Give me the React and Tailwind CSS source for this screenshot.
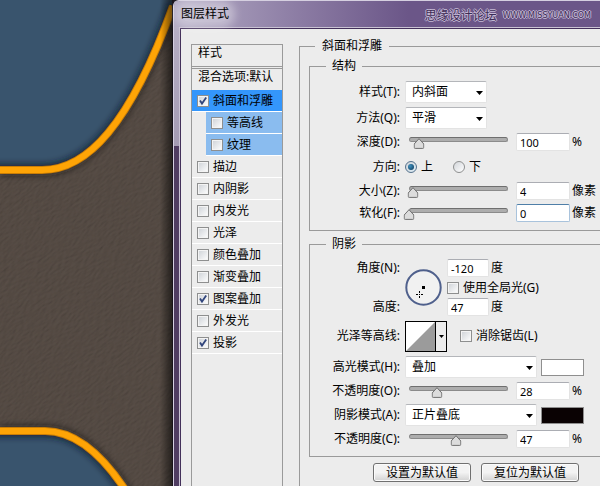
import React, { useState } from 'react';

const EFFECTS = [
  { name: '斜面和浮雕', checked: true, active: true },
  { name: '等高线', checked: false, sub: true },
  { name: '纹理', checked: false, sub: true },
  { name: '描边', checked: false },
  { name: '内阴影', checked: false },
  { name: '内发光', checked: false },
  { name: '光泽', checked: false },
  { name: '颜色叠加', checked: false },
  { name: '渐变叠加', checked: false },
  { name: '图案叠加', checked: true },
  { name: '外发光', checked: false },
  { name: '投影', checked: true },
];

// Document canvas behind the dialog
function Artwork() {
  return (
    <svg className="absolute left-0 top-0" width="200" height="486" viewBox="0 0 200 486" aria-hidden="true">
      <defs>
        <filter id="leather" x="0" y="0" width="100%" height="100%">
          <feTurbulence type="fractalNoise" baseFrequency="0.16 0.5" numOctaves="3" seed="8" result="noise" />
          <feDiffuseLighting in="noise" surfaceScale="0.55" diffuseConstant="1.2" lightingColor="#534843">
            <feDistantLight azimuth="250" elevation="58" />
          </feDiffuseLighting>
        </filter>
        <filter id="soft" x="-20%" y="-20%" width="140%" height="140%">
          <feGaussianBlur stdDeviation="3" />
        </filter>
        <linearGradient id="edge" x1="0" x2="1">
          <stop offset="0" stopColor="#000" stopOpacity="0" />
          <stop offset="1" stopColor="#000" stopOpacity="0.6" />
        </linearGradient>
        <clipPath id="topShape">
          <path d="M0 0H173V6C150 70 128 109 108 133C88 157 66 170 42 170H0Z" />
        </clipPath>
        <clipPath id="bottomShape">
          <path d="M0 431H45C78 431 105 458 128 494H0Z" />
        </clipPath>
      </defs>
      <rect width="200" height="486" fill="#4b413d" />
      <g transform="rotate(-38 100 243)">
        <rect x="-220" y="-120" width="640" height="730" filter="url(#leather)" />
      </g>
      <g fill="none" stroke="#1c1512" strokeOpacity="0.5" strokeWidth="10" filter="url(#soft)">
        <path d="M0 171H42C66 171 88 158 108 134S150 71 173 7" />
        <path d="M0 430H45C78 430 105 457 128 493" />
      </g>
      <g clipPath="url(#topShape)">
        <rect width="180" height="180" fill="#39546d" />
        <path d="M-10 170H42C66 170 88 157 108 133S150 70 173 6" fill="none" stroke="#101c28" strokeOpacity="0.75" strokeWidth="12" filter="url(#soft)" />
      </g>
      <g clipPath="url(#bottomShape)">
        <rect y="425" width="180" height="70" fill="#39546d" />
        <path d="M-10 431H45C78 431 105 458 128 494" fill="none" stroke="#101c28" strokeOpacity="0.75" strokeWidth="12" filter="url(#soft)" />
      </g>
      <g fill="none">
        <path d="M0 170H42C66 170 88 157 108 133S150 70 173 6" stroke="#c97d06" strokeWidth="8" />
        <path d="M0 170H42C66 170 88 157 108 133S150 70 173 6" stroke="#fea406" strokeWidth="6" />
        <path d="M0 431H45C78 431 105 458 128 494" stroke="#c97d06" strokeWidth="8" />
        <path d="M0 431H45C78 431 105 458 128 494" stroke="#fea406" strokeWidth="6" />
      </g>
      <rect x="160" width="13" height="486" fill="url(#edge)" />
      <rect x="172" width="28" height="486" fill="#17121a" />
    </svg>
  );
}

function Checkbox({ label, defaultChecked = false, className = '' }) {
  return (
    <label className={`flex items-center gap-1 whitespace-nowrap ${className}`}>
      <span className="grid size-3 shrink-0 place-items-center">
        <input
          type="checkbox"
          defaultChecked={defaultChecked}
          className="peer col-start-1 row-start-1 size-3 appearance-none border border-[#8e8f8f] bg-linear-to-br from-[#cdd1d6] to-white shadow-[inset_0_0_0_1px_#f4f4f4]"
        />
        <svg viewBox="0 0 12 12" className="pointer-events-none invisible col-start-1 row-start-1 size-3 peer-checked:visible" aria-hidden="true">
          <path d="M3 5.4L5 8.6L9.2 2.6" fill="none" stroke="#31457c" strokeWidth="1.8" />
        </svg>
      </span>
      <span>{label}</span>
    </label>
  );
}

function Radio({ label, defaultChecked = false }) {
  return (
    <label className="flex items-center gap-1">
      <span className="grid size-3 place-items-center">
        <input
          type="radio"
          name="direction"
          defaultChecked={defaultChecked}
          className="peer col-start-1 row-start-1 size-3 appearance-none rounded-full border border-[#8e8f8f] bg-linear-to-br from-[#d2d5d9] to-white checked:border-[#55718c] checked:to-[#dcecf5]"
        />
        <span className="pointer-events-none invisible col-start-1 row-start-1 size-1.5 rounded-full bg-radial-[at_35%_35%] from-[#3c8fbd] to-[#0c3556] peer-checked:visible" />
      </span>
      {label}
    </label>
  );
}

function Label({ htmlFor, children }) {
  return (
    <label htmlFor={htmlFor} className="w-[90px] shrink-0 whitespace-nowrap text-right">
      {children}
    </label>
  );
}

function Select({ id, options, className }) {
  return (
    <span className={`relative block h-[22px] shrink-0 ${className}`}>
      <select
        id={id}
        className="h-full w-full appearance-none rounded-xs border border-[#e3e3e3] border-t-[#b4b6ba] bg-white pl-1.5 leading-4 outline-none"
      >
        {options.map((o) => (
          <option key={o}>{o}</option>
        ))}
      </select>
      <svg viewBox="0 0 7 4" className="pointer-events-none absolute right-1 top-[10px] h-1 w-[7px]" aria-hidden="true">
        <path d="M0 0H7L3.5 4Z" fill="#000" />
      </svg>
    </span>
  );
}

const inputClass = 'h-[18px] shrink-0 rounded-xs border bg-white pl-[3px] text-[11px] leading-4 outline-none';
const inputBorder = 'border-[#e3e3e3] border-t-[#abadb3]';
const inputBorderFocused = 'border-[#a9c3dc] border-t-[#4f7fa8]';

function SliderRow({ id, label, initial, max = 100, unit, focused = false }) {
  const [value, setValue] = useState(initial);
  const percent = Math.min(100, (Number(value) / max) * 100) || 0;

  return (
    <div className="flex items-center">
      <Label htmlFor={id}>{label}</Label>
      <div className="relative ml-[9px] mr-2 h-[18px] w-[99px] shrink-0">
        <div className="mt-1 h-[5px] rounded-full border border-[#8b8b8b] border-t-[#6f6f6f] bg-[#adadad]" />
        <svg
          viewBox="0 0 11 11"
          className="absolute top-[5px] size-[11px] -translate-x-1/2"
          style={{ left: `${percent}%` }}
          aria-hidden="true"
        >
          <path d="M5.5 0.7L10.3 6V9.4Q10.3 10.4 9.3 10.4H1.7Q0.7 10.4 0.7 9.4V6Z" fill="#dcdcdc" stroke="#707070" />
        </svg>
        <input
          type="range"
          aria-label={label}
          min="0"
          max={max}
          value={value}
          onChange={(e) => setValue(e.target.value)}
          className="absolute inset-0 h-full w-full opacity-0"
        />
      </div>
      <input
        id={id}
        type="text"
        value={value}
        onChange={(e) => setValue(e.target.value)}
        className={`${inputClass} w-[54px] ${focused ? inputBorderFocused : inputBorder}`}
      />
      <span className="ml-[2px] whitespace-nowrap">{unit}</span>
    </div>
  );
}

function EffectList() {
  return (
    <div className="mt-[15px] w-[92px] shrink-0 border border-b-0 border-[#9a9a9a]">
      <h2 className="h-[21px] pl-1.5 leading-4">样式</h2>
      <div className="h-[3px] border-y border-[#9a9a9a]" />
      <h3 className="h-[21px] whitespace-nowrap pl-1.5 leading-4">混合选项:默认</h3>
      <ul>
        {EFFECTS.map((e) => (
          <li key={e.name} className={e.sub ? 'pl-[14px]' : ''}>
            <Checkbox
              label={e.name}
              defaultChecked={e.checked}
              className={`h-[22px] border-b border-white pl-[5px] ${e.active ? 'bg-[#3496fb]' : ''} ${e.sub ? 'bg-[#8abcef]' : ''}`}
            />
          </li>
        ))}
      </ul>
    </div>
  );
}

function Group({ title, className = '', children }) {
  return (
    <fieldset className={`min-w-0 border border-r-0 border-[#9a9a9a] pb-2 ${className}`}>
      <legend className="ml-4 px-1.5 leading-4">{title}</legend>
      <div className="mt-[7px] flex flex-col gap-1">{children}</div>
    </fieldset>
  );
}

function Structure() {
  return (
    <Group title="结构" className="mt-1">
      <div className="flex items-center gap-[5px]">
        <Label htmlFor="style">样式(T):</Label>
        <Select id="style" options={['内斜面', '外斜面', '浮雕效果', '枕状浮雕']} className="w-[82px]" />
      </div>
      <div className="flex items-center gap-[5px]">
        <Label htmlFor="technique">方法(Q):</Label>
        <Select id="technique" options={['平滑', '雕刻清晰', '雕刻柔和']} className="w-[82px]" />
      </div>
      <SliderRow id="depth" label="深度(D):" initial={100} max={1000} unit="%" />
      <div className="flex h-[23px] items-center" role="radiogroup" aria-label="方向">
        <span className="mr-[5px] w-[90px] text-right">方向:</span>
        <div className="flex gap-5">
          <Radio label="上" defaultChecked />
          <Radio label="下" />
        </div>
      </div>
      <SliderRow id="size" label="大小(Z):" initial={4} unit="像素" />
      <SliderRow id="soften" label="软化(F):" initial={0} max={16} unit="像素" focused />
    </Group>
  );
}

function Shading() {
  return (
    <Group title="阴影" className="mt-[5px]">
      <div className="grid grid-cols-[90px_37px_auto] grid-rows-[18px_21px_18px] items-center justify-start gap-x-[5px]">
        <Label htmlFor="angle">角度(N):</Label>
        <svg viewBox="0 0 37 37" className="row-span-3 size-[37px]" aria-hidden="true">
          <circle cx="18.5" cy="18.5" r="17.2" fill="#f1f1f1" stroke="#4f608c" strokeWidth="2" />
          <path d="M17 17h3v3h-3z" fill="#000" />
          <path d="M14.5 22v2M14.5 27v2M11 25.5h2M16 25.5h2M14 25.5h1" fill="none" stroke="#000" />
        </svg>
        <div className="flex items-center gap-0.5">
          <input id="angle" type="text" defaultValue="-120" className={`${inputClass} ${inputBorder} w-[42px]`} />
          度
        </div>
        <Checkbox label="使用全局光(G)" className="col-start-3" />
        <Label htmlFor="altitude">高度:</Label>
        <div className="col-start-3 flex items-center gap-0.5">
          <input id="altitude" type="text" defaultValue="47" className={`${inputClass} ${inputBorder} w-[42px]`} />
          度
        </div>
      </div>
      <div className="flex h-8 items-center">
        <Label htmlFor="contour">光泽等高线:</Label>
        <button id="contour" type="button" aria-label="光泽等高线" className="ml-[5px] mr-[13px] flex h-[31px] w-[42px] border border-black">
          <svg viewBox="0 0 29 29" className="h-full w-[29px] bg-white" preserveAspectRatio="none" aria-hidden="true">
            <path d="M0 29L29 0V29Z" fill="#9b9b9b" />
          </svg>
          <span className="flex h-full flex-1 items-center justify-center border-l border-black">
            <svg viewBox="0 0 5 3" className="h-[3px] w-[5px]" aria-hidden="true">
              <path d="M0 0H5L2.5 3Z" fill="#000" />
            </svg>
          </span>
        </button>
        <Checkbox label="消除锯齿(L)" />
      </div>
      <div className="flex items-center gap-[5px]">
        <Label htmlFor="highlight">高光模式(H):</Label>
        <Select id="highlight" options={['叠加', '滤色', '正常']} className="w-[132px]" />
        <button type="button" aria-label="高光颜色" className="-ml-px h-[17px] w-[43px] shrink-0 border border-[#8f8f8f] bg-white" />
      </div>
      <SliderRow id="highlightOpacity" label="不透明度(O):" initial={28} unit="%" />
      <div className="flex items-center gap-[5px]">
        <Label htmlFor="shadow">阴影模式(A):</Label>
        <Select id="shadow" options={['正片叠底', '叠加', '正常']} className="w-[132px]" />
        <button type="button" aria-label="阴影颜色" className="-ml-px h-[17px] w-[43px] shrink-0 border border-[#8f8f8f] bg-[#0a0203]" />
      </div>
      <SliderRow id="shadowOpacity" label="不透明度(C):" initial={47} unit="%" />
    </Group>
  );
}

const buttonClass =
  'h-[19px] w-[98px] shrink-0 rounded-[3px] border border-[#707070] bg-linear-to-b from-[#f3f3f3] from-50% to-[#d2d2d2] leading-4 shadow-[inset_0_0_0_1px_#fbfbfb]';

function App() {
  return (
    <div className="relative min-h-screen overflow-hidden bg-[#4b413d] font-['Noto_Sans','Noto_Sans_CJK_SC',sans-serif] text-xs text-black">
      <Artwork />
      <div className="relative ml-[173px] flex min-h-screen flex-col rounded-tl-md border-l border-t border-[#d5cfe0] bg-[#503d62]">
        <div className="absolute left-0 top-0 h-[145px] w-[5px] rounded-tl-md bg-linear-to-b from-[#b9b2c8] to-[#a49bb3]" />
        <header className="relative flex h-[26px] shrink-0 items-center justify-between rounded-tl-md bg-linear-to-r from-[#b3abc4] via-[#8b7ba3] via-30% to-[#6b5688] to-55% pl-[7px] pr-[9px]">
          <h1 className="rounded-full bg-white/35 shadow-[0_0_8px_6px_rgba(255,255,255,0.35)]">图层样式</h1>
          <div className="flex items-center gap-1.5 whitespace-nowrap pt-1 text-[#3d2b55] [text-shadow:1px_0_#c5bad6,-1px_0_#c5bad6,0_1px_#c5bad6,0_-1px_#c5bad6]">
            <span>思缘设计论坛</span>
            <span className="text-[8px] font-['DejaVu_Sans',sans-serif]">WWW.MISSYUAN.COM</span>
          </div>
        </header>
        <main className="ml-[5px] flex flex-1 border-l border-t border-[#c9c2d3] bg-[#ececec]">
          <div className="flex min-w-0 flex-1 border-l border-t border-[#43305a] pl-[10px]">
            <EffectList />
            <fieldset className="ml-4 mt-[9px] min-w-0 flex-1 border border-b-0 border-r-0 border-[#9a9a9a] pb-1 pl-[9px]">
              <legend className="ml-[6px] px-[7px] leading-4">斜面和浮雕</legend>
              <Structure />
              <Shading />
              <div className="mt-1.5 flex gap-[10px] pl-16">
                <button type="button" className={buttonClass}>设置为默认值</button>
                <button type="button" className={buttonClass}>复位为默认值</button>
              </div>
            </fieldset>
          </div>
        </main>
      </div>
    </div>
  );
}

export default App;
